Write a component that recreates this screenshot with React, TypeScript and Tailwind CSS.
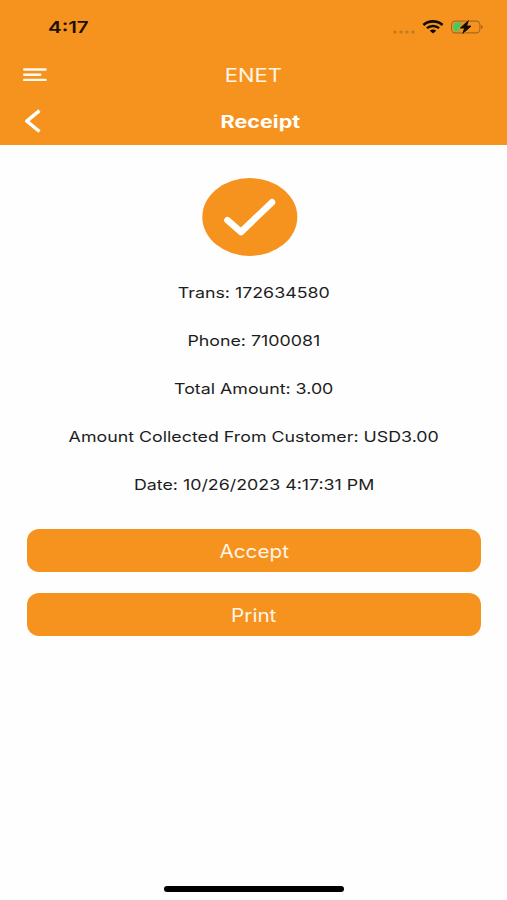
import React from 'react';

const receiptLines = [
  'Trans: 172634580',
  'Phone: 7100081',
  'Total Amount: 3.00',
  'Amount Collected From Customer: USD3.00',
  'Date: 10/26/2023 4:17:31 PM',
];

const actions = ['Accept', 'Print'];

function StatusBar() {
  return (
    <div className="flex h-[54px] items-center justify-between pl-[48px] pr-[23px]">
      <span className="origin-left scale-x-[1.24] pt-px text-[16.5px] font-semibold text-[#1c1003]">4:17</span>
      <div className="flex items-center">
        {/* signal dots */}
        <svg width="24" height="6" viewBox="0 0 24 6" className="mt-[9px]" fill="#c4791f">
          <ellipse cx="3" cy="3" rx="1.9" ry="1.5" />
          <ellipse cx="9" cy="3" rx="1.9" ry="1.5" />
          <ellipse cx="15" cy="3" rx="1.9" ry="1.5" />
          <ellipse cx="21" cy="3" rx="1.9" ry="1.5" />
        </svg>
        {/* wifi */}
        <svg width="22" height="14" viewBox="0 0 22 14" className="ml-[6px]" fill="none" stroke="#120b02">
          <path d="M1.4 4.9C6.8.2 15.2.2 20.6 4.9" strokeWidth="2.6" />
          <path d="M4.9 8.2C8.4 5.2 13.6 5.2 17.1 8.2" strokeWidth="2.4" />
          <path d="M7.8 10.7C9.6 9.2 12.4 9.2 14.2 10.7L11 13.4Z" fill="#120b02" stroke="none" />
        </svg>
        {/* battery, charging */}
        <svg width="34" height="16" viewBox="0 0 34 16" className="ml-[6px]">
          <rect x="1.5" y="2.1" width="28.4" height="11.8" rx="3.6" fill="none" stroke="#aa6a1c" strokeWidth="1.1" />
          <path d="M31.3 6.1c1.6.5 1.6 3.3 0 3.8z" fill="#7c4d12" />
          <path d="M5.5 3.7H12.5L9.8 8.3V12.3H5.5C4.2 12.3 3.4 11.5 3.4 10.4V5.6C3.4 4.5 4.2 3.7 5.5 3.7Z" fill="#3fcc62" />
          <path d="M18.4 1.6L10.4 9H14.8L12.8 14.4L21 7.1H16.5Z" fill="none" stroke="#f6921e" strokeWidth="2.6" />
          <path d="M18.4 1.6L10.4 9H14.8L12.8 14.4L21 7.1H16.5Z" fill="#120b02" stroke="#120b02" strokeWidth="1" strokeLinejoin="round" />
        </svg>
      </div>
    </div>
  );
}

function Header() {
  return (
    <header className="h-[145px] bg-[#f6921e] text-white">
      <StatusBar />
      <div className="grid h-[42px] grid-cols-[1fr_auto_1fr] items-center">
        <button className="ml-[23px] w-6" aria-label="Menu">
          <svg width="24" height="14" viewBox="0 0 24 14" fill="none" stroke="#fffaf0" strokeWidth="2.4" strokeLinecap="round">
            <path d="M1.2 1.5H22.5M1.2 6.7H17.2M1.2 11.9H22.5" />
          </svg>
        </button>
        <h1 className="scale-x-[1.22] text-[18px] text-[#fff6e8]">ENET</h1>
      </div>
      <div className="grid h-[49px] grid-cols-[1fr_auto_1fr] items-center">
        <button className="ml-[24px] w-5" aria-label="Back">
          <svg width="18" height="24" viewBox="0 0 18 24" fill="none" stroke="#fff" strokeWidth="3.5" strokeLinejoin="round">
            <path d="M15.5 1.7L2.8 12.2L15.5 22.5" />
          </svg>
        </button>
        <h2 className="ml-[14px] scale-x-[1.27] pt-[5px] text-[17px] font-bold">Receipt</h2>
      </div>
    </header>
  );
}

export default function App() {
  return (
    <div
      className="flex h-[900px] w-full flex-col overflow-hidden bg-[#fefefe]"
      style={{ fontFamily: 'Inter, "Liberation Sans", sans-serif' }}
    >
      <Header />

      <main className="flex flex-1 flex-col">
        <svg width="96" height="78" viewBox="0 0 96 78" className="ml-[202px] mt-[33px]">
          <ellipse cx="47.8" cy="39" rx="47.5" ry="38.9" fill="#f6921e" />
          <path d="M25.5 42.2L39 54L70 24.3" fill="none" stroke="#fff" strokeWidth="6.6" strokeLinecap="round" strokeLinejoin="round" />
        </svg>

        <div className="mt-[13px] pl-px text-center text-[14.7px] text-[#1d1d1d]">
          {receiptLines.map((line) => (
            <p key={line} className="flex h-12 items-center justify-center">
              <span className="scale-x-[1.212] whitespace-nowrap">{line}</span>
            </p>
          ))}
        </div>

        <div className="mt-[20.3px] flex flex-col gap-[21px] pl-[26.5px] pr-[26px]">
          {actions.map((label) => (
            <button
              key={label}
              className="flex h-[43px] items-center justify-center rounded-[12px] bg-[#f6921e] text-[18px] text-[#fff6e8]"
            >
              <span className="scale-x-[1.15] pt-[2px]">{label}</span>
            </button>
          ))}
        </div>

        {/* home indicator */}
        <div className="ml-[164px] mb-[8.5px] mt-auto h-[5.5px] w-[180px] rounded-full bg-black" />
      </main>
    </div>
  );
}
